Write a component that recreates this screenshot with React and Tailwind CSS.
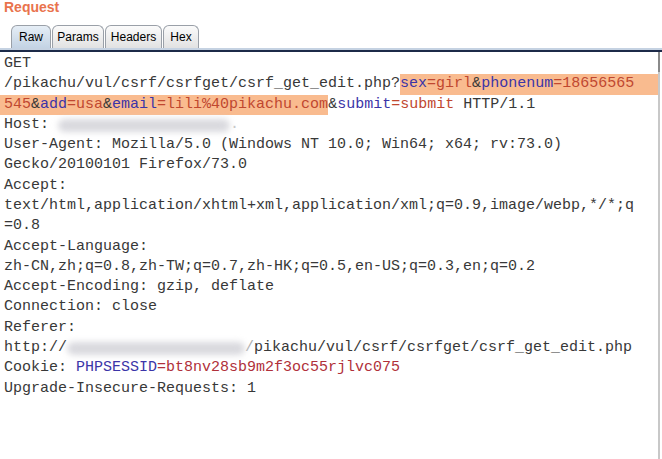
import React from 'react';

const N = ({ children }) => <span className="text-[#3b34a8]">{children}</span>;
const V = ({ children }) => <span className="text-[#c0472f]">{children}</span>;

const Blur = ({ w }) => (
  <span className={`inline-block align-middle h-[13px] ${w} rounded-full bg-[#d9d9de] blur-[3px]`} />
);

const Tab = ({ label, active, w }) => (
  <div
    className={`${w} h-[23px] flex items-center justify-center rounded-t-[6px] border border-b-0 border-[#9aa0a8] text-[12px] text-black ${
      active ? 'bg-gradient-to-b from-[#e6eef6] to-[#c3d3e4]' : 'bg-gradient-to-b from-[#fbfbfb] to-[#e2e2e2]'
    }`}
  >
    {label}
  </div>
);

const Line = ({ children, className = '' }) => (
  <div className={`h-[20.3px] flex items-center whitespace-pre ${className}`}>{children}</div>
);

export default function App() {
  return (
    <div className="w-[662px] h-[459px] bg-white overflow-hidden font-['Liberation_Sans',Arial,sans-serif]">
      <div className="h-[25px] pl-[4px] text-[14px] font-bold text-[#e9734d] leading-[15px]">Request</div>
      <div className="flex items-end pl-[11px] gap-[1px] h-[23px]">
        <Tab label="Raw" active w="w-[40px]" />
        <Tab label="Params" w="w-[52px]" />
        <Tab label="Headers" w="w-[57px]" />
        <Tab label="Hex" w="w-[36px]" />
      </div>
      <div className="h-[2px] bg-[#c5d2e2]" />
      <div className="h-[2px] bg-[#1c2a48]" />
      <div className="flex">
        <div className="w-[658px] pt-[2px] font-['Liberation_Mono','DejaVu_Sans_Mono',monospace] text-[15px] text-[#383838]">
          <Line className="pl-[4px]">GET</Line>
          <Line>
            <span className="pl-[4px]">/pikachu/vul/csrf/csrfget/csrf_get_edit.php?</span>
            <span className="flex-1 h-full flex items-center bg-[#f9bb8f]">
              <N>sex</N><V>=girl</V>&amp;<N>phonenum</N><V>=18656565</V>
            </span>
          </Line>
          <Line>
            <span className="pl-[4px] h-full flex items-center bg-[#f9bb8f]">
              <V>545</V>&amp;<N>add</N><V>=usa</V>&amp;<N>email</N><V>=lili%40pikachu.com</V>
            </span>
            <span>&amp;<N>submit</N><V>=submit</V> HTTP/1.1</span>
          </Line>
          <Line className="pl-[4px]">
            Host: <Blur w="w-[172px]" /><span className="text-[#c8c8c8]">.</span>
          </Line>
          <Line className="pl-[4px]">User-Agent: Mozilla/5.0 (Windows NT 10.0; Win64; x64; rv:73.0)</Line>
          <Line className="pl-[4px]">Gecko/20100101 Firefox/73.0</Line>
          <Line className="pl-[4px]">Accept:</Line>
          <Line className="pl-[4px]">text/html,application/xhtml+xml,application/xml;q=0.9,image/webp,*/*;q</Line>
          <Line className="pl-[4px]">=0.8</Line>
          <Line className="pl-[4px]">Accept-Language:</Line>
          <Line className="pl-[4px]">zh-CN,zh;q=0.8,zh-TW;q=0.7,zh-HK;q=0.5,en-US;q=0.3,en;q=0.2</Line>
          <Line className="pl-[4px]">Accept-Encoding: gzip, deflate</Line>
          <Line className="pl-[4px]">Connection: close</Line>
          <Line className="pl-[4px]">Referer:</Line>
          <Line className="pl-[4px]">
            http://<Blur w="w-[178px]" /><span className="text-[#b0b0b0]">/</span>pikachu/vul/csrf/csrfget/csrf_get_edit.php
          </Line>
          <Line className="pl-[4px]">
            Cookie: <N>PHPSESSID</N><span className="text-[#b0303a]">=bt8nv28sb9m2f3oc55rjlvc075</span>
          </Line>
          <Line className="pl-[4px]">Upgrade-Insecure-Requests: 1</Line>
        </div>
        <div className="w-[2px] h-[407px] bg-[#c8c8c8] flex flex-col">
          <div className="h-[20px] bg-[#8a8a8a]" />
        </div>
      </div>
    </div>
  );
}
